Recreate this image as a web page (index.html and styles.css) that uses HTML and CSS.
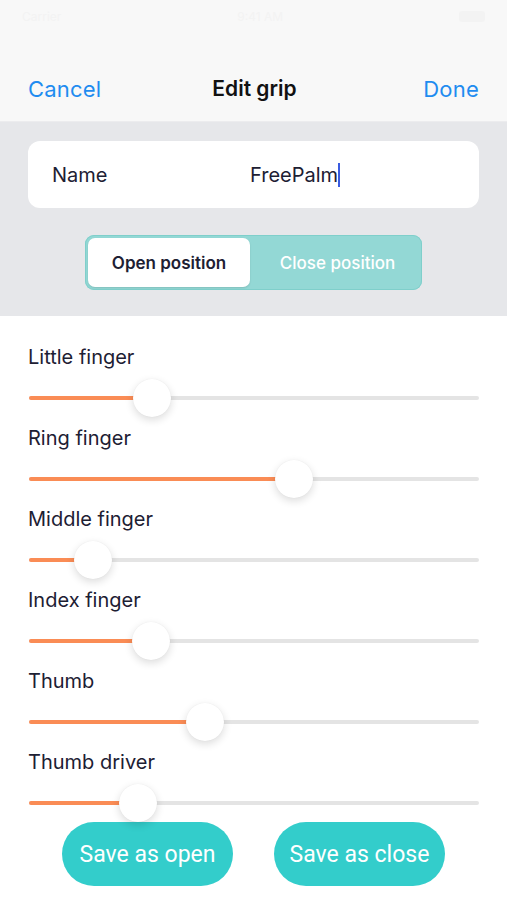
FILE: index.html
```html
<!DOCTYPE html>
<html>
<head>
<meta charset="utf-8">
<link rel="stylesheet" href="styles.css">
</head>
<body>
<div class="screen">
  <header class="top">
    <div class="status">
      <span class="st-left">Carrier</span>
      <span class="st-mid">9:41 AM</span>
      <span class="st-right"></span>
    </div>
    <nav class="nav">
      <span class="nav-btn">Cancel</span>
      <span class="nav-title">Edit grip</span>
      <span class="nav-btn nav-right">Done</span>
    </nav>
  </header>
  <section class="gray">
    <div class="card">
      <span class="card-label">Name</span>
      <span class="card-value">FreePalm<span class="caret"></span></span>
    </div>
    <div class="segment">
      <span class="seg seg-active">Open position</span>
      <span class="seg">Close position</span>
    </div>
  </section>
  <section class="sliders">
    <div class="row">
      <div class="label">Little finger</div>
      <div class="slider"><div class="track"><div class="fill" style="width:27.3%"></div><div class="knob" style="left:27.3%"></div></div></div>
    </div>
    <div class="row">
      <div class="label">Ring finger</div>
      <div class="slider"><div class="track"><div class="fill" style="width:58.9%"></div><div class="knob" style="left:58.9%"></div></div></div>
    </div>
    <div class="row">
      <div class="label">Middle finger</div>
      <div class="slider"><div class="track"><div class="fill" style="width:14.2%"></div><div class="knob" style="left:14.2%"></div></div></div>
    </div>
    <div class="row">
      <div class="label">Index finger</div>
      <div class="slider"><div class="track"><div class="fill" style="width:27.1%"></div><div class="knob" style="left:27.1%"></div></div></div>
    </div>
    <div class="row">
      <div class="label">Thumb</div>
      <div class="slider"><div class="track"><div class="fill" style="width:39.1%"></div><div class="knob" style="left:39.1%"></div></div></div>
    </div>
    <div class="row">
      <div class="label">Thumb driver</div>
      <div class="slider"><div class="track"><div class="fill" style="width:24.2%"></div><div class="knob" style="left:24.2%"></div></div></div>
    </div>
  </section>
  <div class="actions">
    <span class="btn">Save as open</span>
    <span class="btn">Save as close</span>
  </div>
</div>
</body>
</html>
```
FILE: styles.css
```css
* { box-sizing: border-box; }
html, body { margin: 0; padding: 0; }
body {
  font-family: "Inter", "Noto Sans", sans-serif;
  background: #ffffff;
  width: 507px;
  height: 900px;
  overflow: hidden;
}
.screen { display: flex; flex-direction: column; height: 900px; }
.top {
  background: #f8f8f8;
  height: 122px;
  display: flex;
  flex-direction: column;
  border-bottom: 1px solid #ececee;
}
.status {
  height: 32px;
  display: flex;
  align-items: center;
  justify-content: space-between;
  padding: 0 22px;
  color: #f3f3f3;
  font-size: 12px;
}
.st-right { width: 26px; height: 11px; background: #f3f3f3; border-radius: 3px; }
.nav {
  flex: 1;
  display: grid;
  grid-template-columns: 1fr auto 1fr;
  align-items: center;
  padding: 24px 28px 0 28px;
}
.nav-btn { color: #1f8cf0; font-size: 22px; font-weight: 400; letter-spacing: 0.2px; }
.nav-right { justify-self: end; }
.nav-title { color: #111111; font-size: 21px; font-weight: 600; margin-left: 2px; }
.gray {
  background: #e6e7ea;
  height: 194px;
  padding: 19px 28px 0 28px;
  display: flex;
  flex-direction: column;
  align-items: center;
}
.card {
  width: 100%;
  height: 67px;
  background: #ffffff;
  border-radius: 12px;
  display: flex;
  align-items: center;
  padding: 0 24px;
  font-size: 20px;
  color: #1d2033;
}
.card-label { width: 198px; }
.card-value { display: flex; align-items: center; }
.caret { display: inline-block; width: 2px; height: 24px; background: #3a5be0; margin-left: 0; }
.segment {
  margin-top: 27px;
  width: 337px;
  height: 55px;
  background: #93d8d5;
  border-radius: 9px;
  padding: 3px;
  display: flex;
  box-shadow: inset 0 0 0 1px #7fcfcb;
}
.seg {
  flex: 1;
  display: flex;
  align-items: center;
  justify-content: center;
  color: #ffffff;
  font-size: 17px;
  font-weight: 500;
  padding-left: 6px;
}
.seg-active {
  flex: 0 0 162px;
  background: #ffffff;
  color: #1d2033;
  font-weight: 600;
  border-radius: 7px;
  padding-left: 0;
  box-shadow: 0 1px 2px rgba(0,0,0,0.12);
}
.sliders {
  padding: 29px 28px 0 29px;
  display: flex;
  flex-direction: column;
  gap: 9px;
}
.row { display: flex; flex-direction: column; }
.label {
  height: 24px;
  line-height: 24px;
  font-size: 20px;
  color: #1d2033;
  margin-left: -1px;
}
.slider {
  margin-top: 10px;
  height: 38px;
  display: flex;
  align-items: center;
}
.track {
  position: relative;
  width: 100%;
  height: 4px;
  background: #e4e4e4;
  border-radius: 2px;
}
.fill {
  height: 4px;
  background: #fa8c55;
  border-radius: 2px;
}
.knob {
  position: absolute;
  top: -17px;
  width: 38px;
  height: 38px;
  margin-left: -19px;
  border-radius: 50%;
  background: #ffffff;
  box-shadow: 0 3px 8px rgba(0,0,0,0.14), 0 0 1px rgba(0,0,0,0.08);
}
.actions {
  display: flex;
  justify-content: center;
  gap: 41px;
}
.btn {
  width: 171px;
  height: 64px;
  border-radius: 32px;
  background: #33cdcb;
  color: #ffffff;
  font-family: "Roboto", "Inter", sans-serif;
  font-size: 23px;
  display: flex;
  align-items: center;
  justify-content: center;
}
```
